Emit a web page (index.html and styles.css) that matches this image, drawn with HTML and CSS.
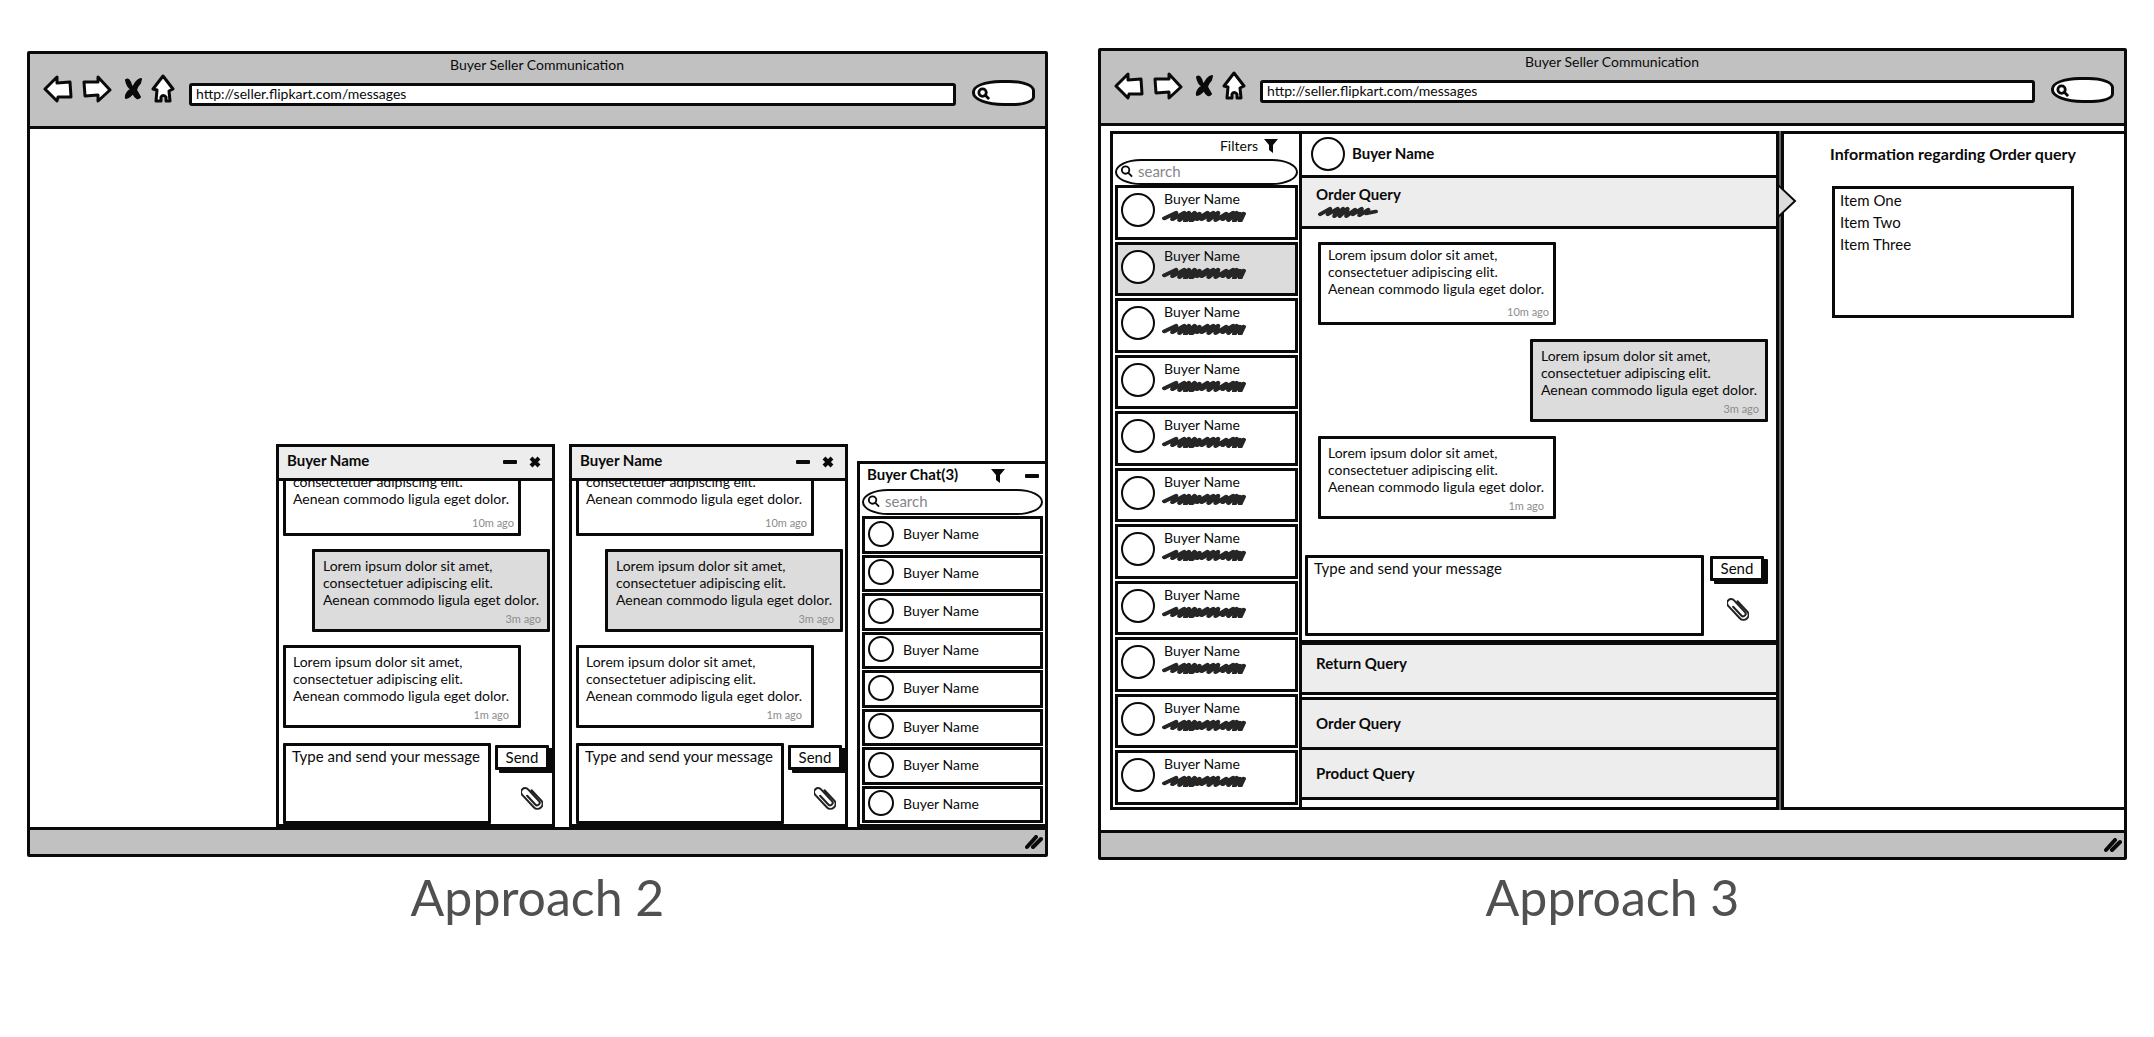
FILE: index.html
```
<!DOCTYPE html>
<html lang="en">
<head>
<meta charset="utf-8">
<title>Buyer Seller Communication</title>
<link rel="stylesheet" href="styles.css">
</head>
<body>
<svg class="sprite" aria-hidden="true">
  <symbol id="back" viewBox="0 0 30 28"><path d="M2 14 14 2v6l13-1 1 15H15l-1 4z"/></symbol>
  <symbol id="forward" viewBox="0 0 30 28"><path d="M2 7h14V2l12 13-12 11v-6L3 21z"/></symbol>
  <symbol id="stop" viewBox="0 0 18 22"><path d="M2 2q3-2 5 5l2 3q3-8 8-9l-1 4q-3 3-4 7l4 7q-3 4-7-4-4 5-7 5-1-4 5-9-4-3-5-9z"/></symbol>
  <symbol id="home" viewBox="0 0 24 30"><path d="M12 2 22 15l-4 2 1 10h-4v-4q-3-3-5 0v4H5l1-11-4-1z"/></symbol>
  <symbol id="lens" viewBox="0 0 14 14"><circle cx="6" cy="6" r="4"/><path d="m9 9 4 4"/></symbol>
  <symbol id="funnel" viewBox="0 0 14 15"><path d="M0 1h14L9 7v8l-4-3V7z"/></symbol>
  <symbol id="minus" viewBox="0 0 14 4"><rect width="14" height="4" rx="1"/></symbol>
  <symbol id="close" viewBox="0 0 12 12"><path d="m2 2 8 8M10 2l-8 8"/></symbol>
  <symbol id="clip" viewBox="-11 -12 22 24"><path transform="rotate(-43)" d="M5-6V8a5 5 0 0 1-10 0V-9a4 4 0 0 1 8 0V7a2 2 0 0 1-5 0V-5"/></symbol>
  <symbol id="grip" viewBox="0 0 18 15"><path d="m2 12 9-10M8 12l8-8"/></symbol>
  <symbol id="scribble" viewBox="0 0 72 13" preserveAspectRatio="none"><path d="m2 9 10-6-3 7 10-7-4 8 8-8-3 9 8-9-3 9 7-8-2 6 9-7-5 7 10-7-4 8 8-8-2 8 9-7-3 6 9-7-4 8 7-8-2 9 5-8v8l3-8"/></symbol>
  <symbol id="scribble-short" viewBox="0 0 55 13" preserveAspectRatio="none"><path d="m2 9 9-6-2 6 9-6-3 8 8-8-3 8 7-8-1 8 8-7-2 5 8-6-2 7 8-6-2 4 9-2"/></symbol>
</svg>

<main class="board">
  <figure class="approach">
    <section class="browser">
      <header class="chrome">
        <h2 class="chrome-title">Buyer Seller Communication</h2>
        <div class="toolbar">
          <nav class="nav" aria-label="Browser">
            <button class="icon-btn" aria-label="Back"><svg class="nav-arrow"><use href="#back"/></svg></button>
            <button class="icon-btn" aria-label="Forward"><svg class="nav-arrow"><use href="#forward"/></svg></button>
            <button class="icon-btn" aria-label="Stop"><svg class="nav-stop"><use href="#stop"/></svg></button>
            <button class="icon-btn" aria-label="Home"><svg class="nav-home"><use href="#home"/></svg></button>
          </nav>
          <input class="url" aria-label="Address" value="http://seller.flipkart.com/messages">
          <label class="web-search"><svg class="lens-sm"><use href="#lens"/></svg><input aria-label="Web search"></label>
        </div>
      </header>
      <div class="dock">
        <article class="chat">
          <header class="chat-head">
            <h3>Buyer Name</h3>
            <button class="icon-btn" aria-label="Minimize"><svg class="i-minus"><use href="#minus"/></svg></button>
            <button class="icon-btn" aria-label="Close"><svg class="i-close"><use href="#close"/></svg></button>
          </header>
          <div class="chat-log">
            <div class="msg msg-scrolled"><p>consectetuer adipiscing elit.<br>Aenean commodo ligula eget dolor.</p><time>10m ago</time></div>
            <div class="msg msg-own"><p>Lorem ipsum dolor sit amet,<br>consectetuer adipiscing elit.<br>Aenean commodo ligula eget dolor.</p><time>3m ago</time></div>
            <div class="msg"><p>Lorem ipsum dolor sit amet,<br>consectetuer adipiscing elit.<br>Aenean commodo ligula eget dolor.</p><time>1m ago</time></div>
          </div>
          <form class="compose">
            <textarea aria-label="Message" placeholder="Type and send your message"></textarea>
            <div class="compose-side">
              <button class="send" type="button">Send</button>
              <button class="icon-btn attach" type="button" aria-label="Attach"><svg class="i-clip"><use href="#clip"/></svg></button>
            </div>
          </form>
        </article>
        <article class="chat">
          <header class="chat-head">
            <h3>Buyer Name</h3>
            <button class="icon-btn" aria-label="Minimize"><svg class="i-minus"><use href="#minus"/></svg></button>
            <button class="icon-btn" aria-label="Close"><svg class="i-close"><use href="#close"/></svg></button>
          </header>
          <div class="chat-log">
            <div class="msg msg-scrolled"><p>consectetuer adipiscing elit.<br>Aenean commodo ligula eget dolor.</p><time>10m ago</time></div>
            <div class="msg msg-own"><p>Lorem ipsum dolor sit amet,<br>consectetuer adipiscing elit.<br>Aenean commodo ligula eget dolor.</p><time>3m ago</time></div>
            <div class="msg"><p>Lorem ipsum dolor sit amet,<br>consectetuer adipiscing elit.<br>Aenean commodo ligula eget dolor.</p><time>1m ago</time></div>
          </div>
          <form class="compose">
            <textarea aria-label="Message" placeholder="Type and send your message"></textarea>
            <div class="compose-side">
              <button class="send" type="button">Send</button>
              <button class="icon-btn attach" type="button" aria-label="Attach"><svg class="i-clip"><use href="#clip"/></svg></button>
            </div>
          </form>
        </article>
        <aside class="roster">
          <header class="roster-head">
            <h3>Buyer Chat(3)</h3>
            <button class="icon-btn" aria-label="Filter"><svg class="i-funnel"><use href="#funnel"/></svg></button>
            <button class="icon-btn" aria-label="Minimize"><svg class="i-minus"><use href="#minus"/></svg></button>
          </header>
          <label class="search"><svg class="lens"><use href="#lens"/></svg><input aria-label="Search buyers" placeholder="search"></label>
          <ul class="buyers">
            <li><span class="avatar"></span>Buyer Name</li>
            <li><span class="avatar"></span>Buyer Name</li>
            <li><span class="avatar"></span>Buyer Name</li>
            <li><span class="avatar"></span>Buyer Name</li>
            <li><span class="avatar"></span>Buyer Name</li>
            <li><span class="avatar"></span>Buyer Name</li>
            <li><span class="avatar"></span>Buyer Name</li>
            <li><span class="avatar"></span>Buyer Name</li>
          </ul>
        </aside>
      </div>
      <footer class="status"><svg class="i-grip"><use href="#grip"/></svg></footer>
    </section>
    <figcaption>Approach 2</figcaption>
  </figure>

  <figure class="approach">
    <section class="browser">
      <header class="chrome">
        <h2 class="chrome-title">Buyer Seller Communication</h2>
        <div class="toolbar">
          <nav class="nav" aria-label="Browser">
            <button class="icon-btn" aria-label="Back"><svg class="nav-arrow"><use href="#back"/></svg></button>
            <button class="icon-btn" aria-label="Forward"><svg class="nav-arrow"><use href="#forward"/></svg></button>
            <button class="icon-btn" aria-label="Stop"><svg class="nav-stop"><use href="#stop"/></svg></button>
            <button class="icon-btn" aria-label="Home"><svg class="nav-home"><use href="#home"/></svg></button>
          </nav>
          <input class="url" aria-label="Address" value="http://seller.flipkart.com/messages">
          <label class="web-search"><svg class="lens-sm"><use href="#lens"/></svg><input aria-label="Web search"></label>
        </div>
      </header>
      <div class="workspace">
        <aside class="sidebar">
          <button class="filters">Filters <svg class="i-funnel"><use href="#funnel"/></svg></button>
          <label class="search"><svg class="lens"><use href="#lens"/></svg><input aria-label="Search buyers" placeholder="search"></label>
          <ul class="threads">
            <li><span class="avatar avatar-lg"></span><div>Buyer Name<svg class="scribble"><use href="#scribble"/></svg></div></li>
            <li class="selected"><span class="avatar avatar-lg"></span><div>Buyer Name<svg class="scribble"><use href="#scribble"/></svg></div></li>
            <li><span class="avatar avatar-lg"></span><div>Buyer Name<svg class="scribble"><use href="#scribble"/></svg></div></li>
            <li><span class="avatar avatar-lg"></span><div>Buyer Name<svg class="scribble"><use href="#scribble"/></svg></div></li>
            <li><span class="avatar avatar-lg"></span><div>Buyer Name<svg class="scribble"><use href="#scribble"/></svg></div></li>
            <li><span class="avatar avatar-lg"></span><div>Buyer Name<svg class="scribble"><use href="#scribble"/></svg></div></li>
            <li><span class="avatar avatar-lg"></span><div>Buyer Name<svg class="scribble"><use href="#scribble"/></svg></div></li>
            <li><span class="avatar avatar-lg"></span><div>Buyer Name<svg class="scribble"><use href="#scribble"/></svg></div></li>
            <li><span class="avatar avatar-lg"></span><div>Buyer Name<svg class="scribble"><use href="#scribble"/></svg></div></li>
            <li><span class="avatar avatar-lg"></span><div>Buyer Name<svg class="scribble"><use href="#scribble"/></svg></div></li>
            <li><span class="avatar avatar-lg"></span><div>Buyer Name<svg class="scribble"><use href="#scribble"/></svg></div></li>
          </ul>
        </aside>
        <section class="conversation">
          <header class="person"><span class="avatar avatar-lg"></span><h3>Buyer Name</h3></header>
          <div class="query-open">
            <h3>Order Query</h3>
            <svg class="scribble-short"><use href="#scribble-short"/></svg>
            <svg class="pointer" viewBox="0 0 20 34" aria-hidden="true"><path d="M1 1v32l17-16z"/></svg>
          </div>
          <div class="thread">
            <div class="msg msg-first"><p>Lorem ipsum dolor sit amet,<br>consectetuer adipiscing elit.<br>Aenean commodo ligula eget dolor.</p><time>10m ago</time></div>
            <div class="msg msg-own"><p>Lorem ipsum dolor sit amet,<br>consectetuer adipiscing elit.<br>Aenean commodo ligula eget dolor.</p><time>3m ago</time></div>
            <div class="msg"><p>Lorem ipsum dolor sit amet,<br>consectetuer adipiscing elit.<br>Aenean commodo ligula eget dolor.</p><time>1m ago</time></div>
          </div>
          <form class="compose compose-wide">
            <textarea aria-label="Message" placeholder="Type and send your message"></textarea>
            <div class="compose-side">
              <button class="send" type="button">Send</button>
              <button class="icon-btn attach" type="button" aria-label="Attach"><svg class="i-clip"><use href="#clip"/></svg></button>
            </div>
          </form>
          <div class="queries">
            <button class="query query-return">Return Query</button>
            <button class="query query-order">Order Query</button>
            <button class="query">Product Query</button>
          </div>
        </section>
        <aside class="detail">
          <h3>Information regarding Order query</h3>
          <ul class="items">
            <li>Item One</li>
            <li>Item Two</li>
            <li>Item Three</li>
          </ul>
        </aside>
      </div>
      <footer class="status"><svg class="i-grip"><use href="#grip"/></svg></footer>
    </section>
    <figcaption>Approach 3</figcaption>
  </figure>
</main>
</body>
</html>
```
FILE: styles.css
```
:root {
  --ink: #0a0a0a;
  --chrome: #c1c1c1;
  --band: #ededed;
  --own: #dcdcdc;
  --line: 3px solid var(--ink);
}

* { box-sizing: border-box; }

body {
  margin: 0;
  background: #fff;
  color: var(--ink);
  font: 14px/17px Lato, "Liberation Sans", sans-serif;
}

h2, h3, p, ul, figure { margin: 0; padding: 0; }
h2 { font-size: 14px; }
h3 { font-size: 15px; }
ul { list-style: none; }
svg { display: block; }
button, input, textarea { font: inherit; color: inherit; }

.sprite { position: absolute; width: 0; height: 0; }

.board {
  display: grid;
  grid-template-columns: 1021fr 1029fr;
  grid-template-rows: auto auto;
  column-gap: 50px;
  padding: 48px 27px 0;
}

.approach {
  display: grid;
  grid-row: span 2;
  grid-template-rows: subgrid;
}

figcaption {
  padding-top: 5px;
  color: #505050;
  font-size: 50px;
  line-height: 64px;
  text-align: center;
}

/* Browser frame */
.browser {
  align-self: center;
  border: var(--line);
  border-radius: 2px;
}

.chrome {
  padding: 1px 10px 20px 13px;
  border-bottom: var(--line);
  background: var(--chrome);
}

.chrome-title {
  padding-right: 4px;
  font-weight: 400;
  line-height: 19px;
  text-align: center;
}

.toolbar {
  display: flex;
  align-items: flex-end;
  height: 32px;
}

.nav {
  display: flex;
  align-items: center;
  gap: 9px;
  padding-bottom: 2px;
  margin-right: 14px;
}

.icon-btn {
  display: block;
  padding: 0;
  border: 0;
  background: none;
}

.nav svg { fill: #fff; stroke: var(--ink); stroke-width: 3px; stroke-linejoin: round; }
.nav-arrow { width: 30px; height: 28px; }
.nav-stop { width: 18px; height: 22px; margin-left: 3px; }
.nav .nav-stop { fill: var(--ink); stroke-width: 2px; }
.nav-home { width: 24px; height: 30px; }

.url {
  flex: 1;
  min-width: 0;
  height: 23px;
  margin-right: 16px;
  padding: 0 4px 2px;
  border: var(--line);
  border-radius: 3px;
  background: #fff;
}

.web-search {
  display: flex;
  align-items: center;
  width: 63px;
  height: 26px;
  padding-left: 2px;
  border: var(--line);
  border-radius: 45% 40% 35% 50%;
  background: #fff;
}

.web-search input { width: 100%; min-width: 0; border: 0; background: none; }
.lens-sm { flex: none; width: 13px; height: 13px; fill: none; stroke: var(--ink); stroke-width: 3px; }

.status {
  display: flex;
  align-items: center;
  justify-content: flex-end;
  height: 27px;
  padding-right: 2px;
  border-top: var(--line);
  background: var(--chrome);
}

.i-grip { width: 18px; height: 15px; stroke: var(--ink); stroke-width: 4px; stroke-linecap: round; }

/* Shared parts */
.i-minus { width: 14px; height: 4px; fill: var(--ink); }
.i-close { width: 12px; height: 12px; stroke: var(--ink); stroke-width: 4px; }
.i-funnel { width: 14px; height: 15px; fill: var(--ink); }
.i-clip { width: 22px; height: 24px; fill: none; stroke: #222; stroke-width: 2px; stroke-linecap: round; }

.avatar {
  flex: none;
  width: 26px;
  height: 26px;
  border: 2px solid var(--ink);
  border-radius: 50%;
  background: #fff;
}

.avatar-lg { width: 34px; height: 34px; }

.search {
  display: flex;
  align-items: center;
  gap: 5px;
  height: 26px;
  padding: 0 6px 2px 3px;
  border: 2px solid var(--ink);
  border-radius: 26px / 13px;
  background: #fff;
}

.search input { flex: 1; min-width: 0; padding: 0; border: 0; background: none; font-size: 15px; }
.search input::placeholder { color: #85858c; opacity: 1; }
.lens { width: 13px; height: 14px; fill: none; stroke: var(--ink); stroke-width: 2px; }

.msg {
  display: flex;
  flex: none;
  flex-direction: column;
  justify-content: space-between;
  align-self: flex-start;
  width: 238px;
  min-height: 83px;
  padding: 5px 9px 3px 7px;
  border: var(--line);
  border-radius: 1px;
  background: #fff;
  white-space: nowrap;
}

.msg time { color: #8c8c8c; font-size: 11px; line-height: 14px; text-align: right; }
.msg-first { padding-top: 1px; padding-right: 4px; }
.msg-own { align-self: flex-end; background: var(--own); padding-left: 8px; padding-right: 6px; }

/* Oldest message, with its first line already scrolled away */
.msg-scrolled { padding-top: 17px; padding-right: 4px; }

.compose { display: flex; gap: 4px; }

.compose textarea {
  flex: 1;
  min-width: 0;
  height: 81px;
  padding: 2px 6px;
  border: var(--line);
  border-radius: 1px;
  font-size: 15px;
  resize: none;
}

.compose textarea::placeholder { color: var(--ink); opacity: 1; }

.compose-side {
  display: flex;
  flex-direction: column;
  align-items: flex-end;
  gap: 16px;
  padding-top: 2px;
}

.send {
  width: 54px;
  height: 25px;
  padding: 0;
  border: var(--line);
  border-radius: 1px;
  background: #fff;
  box-shadow: 4px 3px 0 var(--ink);
  font-size: 15px;
}

.attach { margin-right: 6px; }

/* Docked chats */
.dock {
  display: flex;
  align-items: flex-end;
  justify-content: flex-end;
  min-height: 698px;
}

.chat {
  display: flex;
  flex-direction: column;
  width: 279px;
  height: 383px;
  margin-right: 14px;
  border: var(--line);
}

.chat + .chat { margin-right: 9px; }

.chat-head {
  display: flex;
  flex: none;
  align-items: center;
  gap: 12px;
  height: 34px;
  padding: 0 11px 2px 8px;
  border-bottom: var(--line);
  background: var(--band);
}

.chat-head h3, .roster-head h3 { flex: 1; padding-bottom: 2px; }

.chat-log {
  display: flex;
  flex: 1;
  flex-direction: column;
  justify-content: flex-end;
  gap: 13px;
  min-height: 0;
  padding: 0 2px 15px 4px;
  overflow: hidden;
}

.chat .compose { padding: 0 3px 0 4px; }

.roster {
  display: flex;
  flex-direction: column;
  width: 188px;
  min-height: 366px;
  padding: 0 2px 1px;
  border: var(--line);
  border-right: 0;
}

.roster-head {
  display: flex;
  align-items: center;
  gap: 20px;
  height: 25px;
  padding: 0 4px 2px 5px;
}

.buyers {
  display: flex;
  flex: 1;
  flex-direction: column;
}

.buyers li {
  display: flex;
  flex: 1;
  align-items: center;
  gap: 9px;
  margin-top: 1px;
  padding: 0 0 2px 3px;
  border: var(--line);
  background: #fff;
}

/* Three-pane workspace */
.workspace {
  display: grid;
  grid-template-columns: 189px minmax(0, 480fr) minmax(0, 345fr);
  min-height: 704px;
  padding: 5px 0 20px 9px;
}

.sidebar {
  display: flex;
  flex-direction: column;
  padding: 0 1px 2px 2px;
  border: var(--line);
  border-right: 0;
}

.filters {
  display: flex;
  align-items: center;
  justify-content: flex-end;
  gap: 6px;
  height: 25px;
  padding: 0 20px 2px 0;
  border: 0;
  background: none;
}

.threads {
  display: flex;
  flex: 1;
  flex-direction: column;
  gap: 2px;
}

.threads li {
  display: flex;
  flex: 1;
  gap: 7px;
  padding: 2px 3px;
  border: var(--line);
}

.threads .avatar { margin-top: 3px; }
.threads .selected { background: var(--own); }

.threads div { padding-left: 2px; }
.scribble { width: 84px; height: 12px; margin-left: -2px; margin-top: 3px; }
.scribble, .scribble-short { fill: none; stroke: #262626; stroke-width: 4px; stroke-linecap: round; stroke-linejoin: round; }
.scribble-short { width: 60px; height: 12px; margin-left: 2px; margin-top: 3px; }

.conversation {
  display: flex;
  flex-direction: column;
  border: var(--line);
}

.person {
  display: flex;
  align-items: center;
  gap: 7px;
  height: 44px;
  padding: 0 0 2px 9px;
  border-bottom: var(--line);
}

.query-open {
  position: relative;
  height: 51px;
  padding: 8px 14px;
  border-bottom: var(--line);
  background: var(--band);
}

.pointer {
  position: absolute;
  top: 6px;
  right: -21px;
  width: 20px;
  height: 34px;
  fill: var(--own);
  stroke: var(--ink);
  stroke-width: 2px;
}

.thread {
  display: flex;
  flex: 1;
  flex-direction: column;
  gap: 14px;
  padding: 13px 8px 0 16px;
}

.compose-wide { gap: 6px; padding: 0 12px 4px 3px; }
.compose-wide .compose-side { padding-top: 1px; }
.compose-wide .attach { margin-right: 15px; }

.queries {
  display: flex;
  flex-direction: column;
  padding-bottom: 7px;
  border-top: 2px solid var(--ink);
}

.query {
  height: 50px;
  padding: 0 14px;
  border: 0 solid var(--ink);
  border-bottom-width: 3px;
  background: var(--band);
  font-size: 15px;
  font-weight: 700;
  text-align: left;
}

.query-return { height: 53px; border-top-width: 3px; padding-bottom: 10px; }
.query-order { height: 53px; margin-top: 2px; border-top-width: 3px; }

.detail {
  margin-left: 2px;
  padding: 10px 50px 0 48px;
  border: var(--line);
  border-right: 0;
  box-shadow: -2px 0 0 #666;
}

.detail h3 {
  display: flex;
  justify-content: center;
  font-size: 16px;
  line-height: 20px;
  white-space: nowrap;
}

.items {
  min-height: 132px;
  margin-top: 22px;
  padding: 0 5px;
  border: var(--line);
  font-size: 15px;
  line-height: 21px;
  line-height: 22px;
}
```
